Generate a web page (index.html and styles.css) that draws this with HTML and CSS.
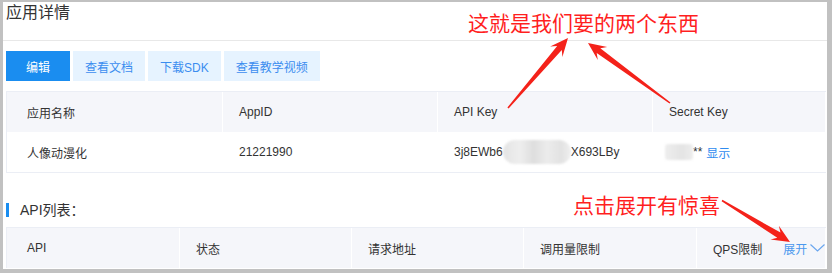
FILE: index.html
```html
<!DOCTYPE html>
<html lang="zh-CN">
<head>
    <meta charset="UTF-8">
    <meta name="viewport" content="width=device-width, initial-scale=1.0">
    <title>应用详情</title>
    <link rel="stylesheet" href="styles.css">
</head>
<body>
    <div class="page">
        <div class="page-title">应用详情</div>

        <div class="toolbar">
            <button class="btn btn-primary">编辑</button>
            <button class="btn">查看文档</button>
            <button class="btn">下载SDK</button>
            <button class="btn">查看教学视频</button>
        </div>

        <div class="info-table">
            <div class="cell head">应用名称</div>
            <div class="cell head">AppID</div>
            <div class="cell head">API Key</div>
            <div class="cell head">Secret Key</div>

            <div class="cell">人像动漫化</div>
            <div class="cell">21221990</div>
            <div class="cell">3j8EWb6<span class="mask mask-key"></span>X693LBy</div>
            <div class="cell"><span class="mask mask-secret"></span>** <a class="link">显示</a></div>
        </div>

        <div class="section-title">API列表：</div>

        <div class="api-table">
            <div class="cell head">API</div>
            <div class="cell head">状态</div>
            <div class="cell head">请求地址</div>
            <div class="cell head">调用量限制</div>
            <div class="cell head">QPS限制
                <span class="expand">展开
                    <svg class="chevron" width="15" height="8" viewBox="0 0 15 8">
                        <polyline points="0.5,0.5 7.5,7 14.5,0.5" fill="none" stroke="#6aa6ee" stroke-width="1.2"/>
                    </svg>
                </span>
            </div>
        </div>
    </div>

    <!-- annotations drawn over the screenshot -->
    <div class="notes">
        <div class="note note-top">这就是我们要的两个东西</div>
        <div class="note note-bottom">点击展开有惊喜</div>
        <svg class="arrows" width="832" height="273" viewBox="0 0 832 273">
            <polygon points="508.6,108.5 561.8,49.9 562.4,56.9 568,38 550.2,46.5 557.2,46 507.4,107.5"/>
            <polygon points="670.5,102.4 600.3,48.3 607.2,47.1 588,43 597.8,60.1 596.7,53.1 669.5,103.6"/>
            <polygon points="721.6,201.2 777.3,237.8 770.5,239.4 790,242 778.8,225.8 780.5,232.6 722.4,199.8"/>
        </svg>
    </div>
</body>
</html>
```

FILE: styles.css
```css
body {
    margin: 0;
    height: 273px;
    overflow: hidden;
    position: relative;
    background: #c1c1c1;
    font-family: "Liberation Sans", "Noto Sans CJK SC", sans-serif;
    color: #333;
}

.page {
    margin: 2px 5px 0 3px;
    height: 267px;
    background: #fff;
    overflow: hidden;
}

.page-title {
    height: 38px;
    padding-left: 3px;
    border-bottom: 1px solid #e8e8e8;
    font-size: 16px;
    line-height: 22px;
}

.toolbar {
    display: flex;
    gap: 3px;
    margin: 10px 0 0 3px;
}

.btn {
    height: 30px;
    padding: 0 12px;
    border: none;
    border-radius: 0;
    background: #e6f3ff;
    color: #3b8def;
    font-family: inherit;
    font-size: 12px;
}

.btn-primary {
    min-width: 64px;
    background: #1a8df0;
    color: #fff;
}

.info-table,
.api-table {
    display: grid;
    width: 819px;
    margin-left: 3px;
    border: 1px solid #ebeef5;
    border-right: none;
    font-size: 12px;
}

.info-table {
    grid-template-columns: 216px 215px 215px 1fr;
    margin-top: 10px;
}

.api-table {
    grid-template-columns: 173px 172px 172px 173px 1fr;
    margin-top: 10px;
    border-bottom: none;
}

.cell {
    display: flex;
    align-items: center;
    height: 40px;
    padding-left: 16px;
    white-space: nowrap;
}

.cell:first-child,
.info-table .cell:nth-child(5) {
    padding-left: 20px;
}

.cell.head {
    background: #f5f6fa;
    border-right: 1px solid #fff;
}

.mask {
    display: inline-block;
    border-radius: 12px;
    filter: blur(1.2px);
}

.mask-key {
    width: 68px;
    height: 24px;
    background: linear-gradient(90deg, #e4e4e4, #eeeeee 25%, #dedede 45%, #ececec 65%, #e2e2e2 85%, #efefef);
}

.mask-secret {
    width: 28px;
    height: 16px;
    margin-left: -4px;
    background: linear-gradient(90deg, #eeeeee, #e4e4e4 60%, #ededed);
    border-radius: 3px;
}

.link {
    margin-left: 4px;
    color: #2f8bef;
}

.section-title {
    height: 14px;
    margin: 30px 0 0 3px;
    padding-left: 11px;
    border-left: 3px solid #1a8df0;
    font-size: 14px;
    line-height: 14px;
}

.expand {
    display: inline-flex;
    align-items: center;
    margin-left: 21px;
    color: #4a98ee;
}

.chevron {
    margin-left: 3px;
}

.notes {
    position: absolute;
    left: 0;
    top: 0;
    width: 832px;
    height: 273px;
    pointer-events: none;
}

.note {
    position: absolute;
    font-family: "Noto Sans CJK SC", sans-serif;
    font-size: 21px;
    line-height: 21px;
    color: #ff1f1f;
    white-space: nowrap;
}

.note-top {
    left: 468px;
    top: 12px;
}

.note-bottom {
    left: 573px;
    top: 194px;
}

.arrows {
    position: absolute;
    left: 0;
    top: 0;
    fill: #f4221a;
}
```
